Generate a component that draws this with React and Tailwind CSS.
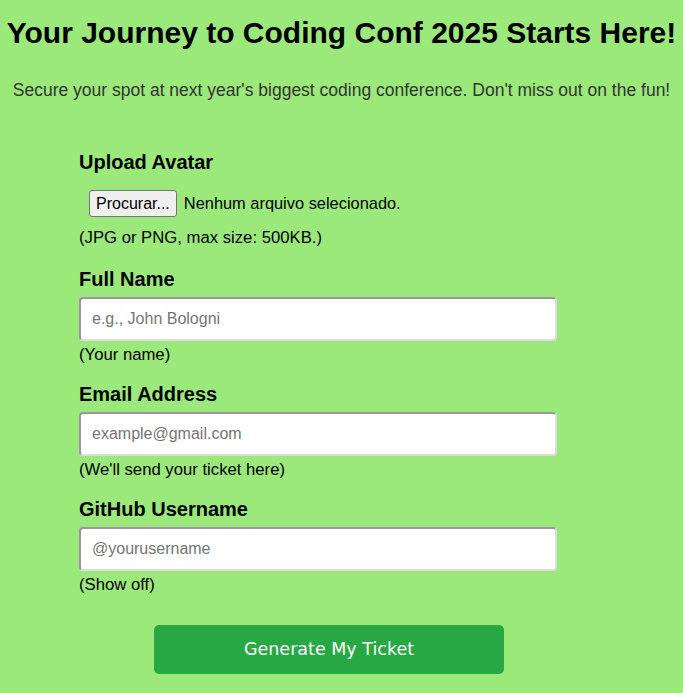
export default function App() {
  return (
    <div className="min-h-screen bg-[#9be97b] text-black font-['Liberation_Sans',Arial,sans-serif] pt-[15px]">
      <h1 className="text-center text-[30px] font-bold leading-[36px]">
        Your Journey to Coding Conf 2025 Starts Here!
      </h1>
      <p className="mt-[29px] text-center text-[17.5px] leading-[20px] text-[#333]">
        Secure your spot at next year's biggest coding conference. Don't miss out on the fun!
      </p>

      <form className="pl-[79px] mt-[50px]" onSubmit={(e) => e.preventDefault()}>
        <div>
          <label className="block text-[20px] font-bold leading-[24px]">Upload Avatar</label>
          <div className="mt-[16px] flex items-center gap-[7px] pl-[10px]">
            <button
              type="button"
              className="h-[27px] px-[6px] text-[16px] bg-[#efefef] border border-[#767676] rounded-[3px] leading-none"
            >
              Procurar...
            </button>
            <span className="text-[16.4px]">Nenhum arquivo selecionado.</span>
          </div>
          <p className="mt-[12px] text-[16.7px] leading-[18px]">(JPG or PNG, max size: 500KB.)</p>
        </div>

        <Field label="Full Name" placeholder="e.g., John Bologni" help="(Your name)" first />
        <Field label="Email Address" placeholder="example@gmail.com" help="(We'll send your ticket here)" />
        <Field label="GitHub Username" placeholder="@yourusername" help="(Show off)" />

        <button
          type="submit"
          className="mt-[31px] ml-[75px] w-[350px] h-[49px] rounded-[5px] bg-[#28a745] text-white text-[17.5px] font-['DejaVu_Sans',Verdana,sans-serif]"
        >
          Generate My Ticket
        </button>
      </form>
    </div>
  )
}

function Field({ label, placeholder, help, first }) {
  return (
    <div className={first ? 'mt-[20px]' : 'mt-[18px]'}>
      <label className="block text-[20px] font-bold leading-[24px]">{label}</label>
      <input
        type="text"
        placeholder={placeholder}
        className="mt-[6px] block w-[478px] h-[44px] px-[11px] bg-white text-[16px] rounded-[4px] border-2 border-t-[#999] border-l-[#999] border-r-[#ddd] border-b-[#ddd] placeholder:text-[#757575] outline-none"
      />
      <p className="text-[16.7px] leading-[18px] mt-[5px]">{help}</p>
    </div>
  )
}
